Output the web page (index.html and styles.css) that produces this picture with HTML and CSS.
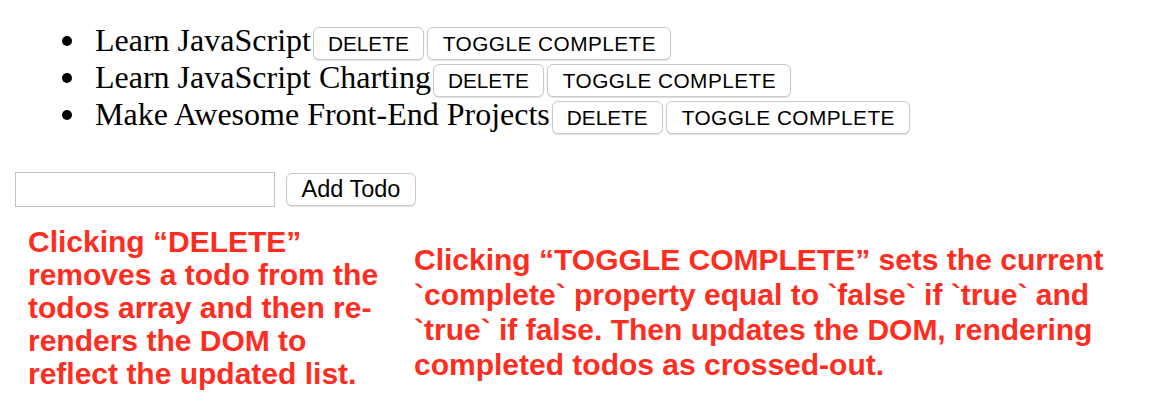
FILE: index.html
```html
<!DOCTYPE html>
<html>
<head>
<meta charset="utf-8">
<link rel="stylesheet" href="styles.css">
</head>
<body>
<ul class="todos">
  <li>Learn JavaScript<button class="btn">DELETE</button><button class="btn btn-toggle">TOGGLE COMPLETE</button></li>
  <li>Learn JavaScript Charting<button class="btn">DELETE</button><button class="btn btn-toggle">TOGGLE COMPLETE</button></li>
  <li>Make Awesome Front-End Projects<button class="btn">DELETE</button><button class="btn btn-toggle">TOGGLE COMPLETE</button></li>
</ul>
<div class="add-row">
  <input class="todo-input" type="text">
  <button class="btn add-btn">Add Todo</button>
</div>
<div class="notes">
  <p class="note note-left">Clicking “DELETE”<br>removes a todo from the<br>todos array and then re-<br>renders the DOM to<br>reflect the updated list.</p>
  <p class="note note-right">Clicking “TOGGLE COMPLETE” sets the current<br>`complete` property equal to `false` if `true` and<br>`true` if false. Then updates the DOM, rendering<br>completed todos as crossed-out.</p>
</div>
</body>
</html>
```

FILE: styles.css
```css
html, body {
  margin: 0;
  padding: 0;
  background: #ffffff;
}

.todos {
  margin: 22px 0 0 0;
  padding-left: 95px;
  list-style: none;
  font-family: "Liberation Serif", "Times New Roman", serif;
  font-size: 32px;
  color: #000;
}

.todos li {
  height: 37px;
  line-height: 37px;
}

.todos li::before {
  content: "";
  display: inline-block;
  width: 10px;
  height: 10px;
  border-radius: 50%;
  background: #000;
  margin-left: -33px;
  margin-right: 23px;
  vertical-align: 5px;
}

.btn {
  font-family: "Liberation Sans", Arial, sans-serif;
  font-size: 20.8px;
  color: #000;
  background: #ffffff;
  border: 1px solid #c9c9c9;
  border-radius: 6px;
  box-shadow: 0 1px 1px rgba(0, 0, 0, 0.12);
  height: 33px;
  padding: 0 14px;
  margin: 0 0 0 2px;
  line-height: 31px;
  vertical-align: baseline;
}

.todos .btn + .btn {
  margin-left: 3px;
}

.btn-toggle {
  letter-spacing: 0.45px;
  padding: 0 14px 0 15px;
}

.add-row {
  display: flex;
  align-items: center;
  gap: 11px;
  margin: 39px 0 0 15px;
}

.todo-input {
  width: 260px;
  height: 35px;
  box-sizing: border-box;
  border: 1px solid #c2c2c2;
  margin: 0;
  padding: 0 4px;
}

.add-btn {
  font-size: 23.5px;
  width: 130px;
  height: 33px;
  padding: 0;
  margin: 0;
}

.notes {
  display: flex;
  align-items: flex-start;
  margin-top: 18px;
  font-family: "Liberation Sans", Arial, sans-serif;
  font-weight: bold;
  color: #ff2d1f;
}

.note {
  margin: 0;
  white-space: nowrap;
}

.note-left {
  margin-left: 28px;
  font-size: 30px;
  line-height: 33px;
  width: 386px;
}

.note-right {
  margin-top: 17px;
  font-size: 30px;
  line-height: 35px;
}
```
